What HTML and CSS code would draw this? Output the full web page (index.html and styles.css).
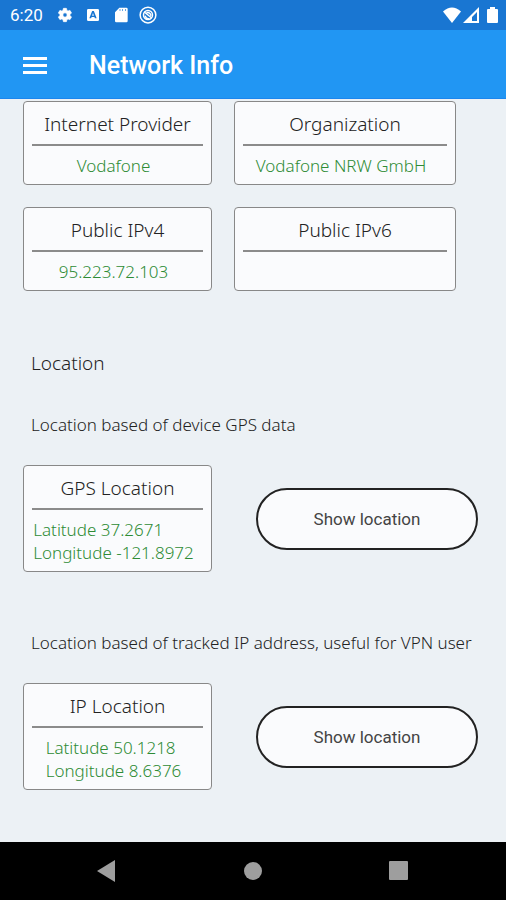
FILE: index.html
```html
<!DOCTYPE html>
<html lang="en">
<head>
<meta charset="utf-8">
<meta name="viewport" content="width=device-width, initial-scale=1">
<title>Network Info</title>
<link rel="stylesheet" href="styles.css">
</head>
<body>
<div class="status-bar">
  <span class="clock">6:20</span>
  <svg class="status-icon" viewBox="0 0 24 24" aria-hidden="true"><path stroke="currentColor" d="M19.4 13c0-.3.1-.6.1-1s0-.7-.1-1l2.100-1.600c.2-.1.3-.4.1-.6l-2-3.500c-.1-.2-.4-.3-.6-.2l-2.500 1c-.5-.4-1.100-.7-1.700-1l-.4-2.600c0-.3-.2-.5-.5-.5h-4c-.3 0-.5.2-.5.4L9 5.100c-.6.2-1.200.6-1.700 1l-2.500-1c-.2-.1-.5 0-.6.200l-2 3.500c-.1.2-.1.4.1.6L4.500 11c0 .3-.1.6-.1 1s0 .7.1 1l-2.200 1.600c-.2.200-.2.400-.1.600l2 3.500c.1.200.4.300.6.200l2.500-1c.5.400 1.100.7 1.700 1l.4 2.700c0 .2.200.4.500.4h4c.3 0 .5-.2.500-.4l.4-2.700c.6-.200 1.200-.6 1.700-1l2.500 1c.2.100.5 0 .6-.2l2-3.500c.1-.2.100-.4-.1-.6zM12 15.200a3.200 3.200 0 1 1 0-6.400 3.200 3.200 0 0 1 0 6.400z"/></svg>
  <svg class="status-icon" viewBox="0 0 24 24" aria-hidden="true"><path fill-rule="evenodd" d="M5 3h14q2 0 2 2v14q0 2-2 2H5q-2 0-2-2V5q0-2 2-2zm5.700 3L6.500 17h2.700l.7-2h4.200l.7 2h2.700L13.300 6zm1.300 3l1.300 4h-2.600z"/></svg>
  <svg class="status-icon" viewBox="0 0 24 24" aria-hidden="true"><path fill-rule="evenodd" d="M9.500 1H20q2 0 2 2v18q0 2-2 2H5q-2 0-2-2V8zM10 3v3h1V3zm4 0v3h1V3zm4 0v3h1V3z"/></svg>
  <svg class="status-icon target" viewBox="0 0 24 24" aria-hidden="true"><circle cx="12" cy="12" r="10.500"/><circle cx="12" cy="12" r="6"/><path d="M7 8l10 8M10 9q5-1 6 4M8 13q2 5 6 4"/></svg>
  <div class="signals">
    <svg class="wifi" viewBox="0 0 18 16" aria-hidden="true"><path d="M0 4.500Q9-3.500 18 4.500L9 16z"/></svg>
    <svg class="cell" viewBox="0 0 16 16" aria-hidden="true"><path fill-rule="evenodd" d="M16 0v16H0zM14 5l-5 5v4h5z"/></svg>
    <svg class="battery" viewBox="0 0 11 16" aria-hidden="true"><path d="M3 0h5v2h2q1 0 1 1v12q0 1-1 1H1q-1 0-1-1V3q0-1 1-1h2z"/></svg>
  </div>
</div>
<header class="app-bar">
  <button class="menu" type="button" aria-label="Menu"><svg viewBox="0 0 24 18" aria-hidden="true"><path d="M0 0h24v3H0zM0 7h24v3H0zM0 14h24v3H0z"/></svg></button>
  <h1>Network Info</h1>
</header>
<main>
  <div class="pair">
    <section class="card"><h2>Internet Provider</h2><p class="value">Vodafone</p></section>
    <section class="card"><h2>Organization</h2><p class="value">Vodafone NRW GmbH</p></section>
    <section class="card"><h2>Public IPv4</h2><p class="value">95.223.72.103</p></section>
    <section class="card"><h2>Public IPv6</h2><p class="value"></p></section>
  </div>
  <h2 class="heading">Location</h2>
  <p class="note">Location based of device GPS data</p>
  <div class="pair location">
    <section class="card"><h2>GPS Location</h2><p class="value">Latitude 37.2671<br>Longitude -121.8972</p></section>
    <button class="show" type="button">Show location</button>
  </div>
  <p class="note">Location based of tracked IP address, useful for VPN user</p>
  <div class="pair location">
    <section class="card"><h2>IP Location</h2><p class="value">Latitude 50.1218<br>Longitude 8.6376</p></section>
    <button class="show" type="button">Show location</button>
  </div>
</main>
<nav class="system-nav" aria-label="System">
  <button type="button" aria-label="Back"><svg viewBox="0 0 20 22" aria-hidden="true"><path d="M0 11L18 0v22z"/></svg></button>
  <button type="button" aria-label="Home"><svg viewBox="0 0 20 22" aria-hidden="true"><circle cx="10" cy="11" r="9"/></svg></button>
  <button type="button" aria-label="Recent apps"><svg viewBox="0 0 20 22" aria-hidden="true"><rect y="1" width="19" height="19" rx="1"/></svg></button>
</nav>
</body>
</html>
```
FILE: styles.css
```css
* {
  box-sizing: border-box;
}

body {
  display: flex;
  flex-direction: column;
  min-height: 100vh;
  margin: 0;
  background: #ecf1f5;
  color: #222;
  font-family: "Noto Sans", sans-serif;
  font-weight: 300;
}

h1, h2, p {
  margin: 0;
}

button {
  padding: 0;
  border: 0;
  background: none;
  color: inherit;
}

svg {
  display: block;
  fill: currentColor;
}

.status-bar {
  display: flex;
  align-items: center;
  gap: 12px;
  height: 30px;
  padding: 0 8px 0 10px;
  background: #1976d2;
  color: #fff;
}

.clock {
  margin-right: 2px;
  font: 400 17px/30px Roboto, sans-serif;
}

.status-icon {
  width: 16px;
  height: 16px;
}

.target {
  width: 18px;
  height: 18px;
  margin-left: -2px;
  fill: none;
  stroke: currentColor;
  stroke-width: 2;
}

.signals {
  display: flex;
  gap: 2px;
  margin-left: auto;
}

.wifi {
  width: 18px;
  height: 16px;
}

.cell {
  width: 16px;
  height: 16px;
}

.battery {
  width: 11px;
  height: 16px;
  margin-left: 6px;
}

.app-bar {
  display: flex;
  align-items: center;
  gap: 42px;
  height: 69px;
  padding: 3px 23px 0;
  border-bottom: 1px solid #1c86ee;
  background: #2196f3;
  color: #fff;
}

.menu svg {
  width: 24px;
  height: 18px;
}

.app-bar h1 {
  font: 500 25px/32px Roboto, sans-serif;
}

main {
  flex: 1;
  padding: 2px 28px 50px 23px;
}

.pair {
  display: grid;
  grid-template-columns: 189fr 222fr;
  gap: 22px;
  padding-right: 22px;
}

.location {
  align-items: center;
  column-gap: 44px;
  padding-right: 0;
}

.card {
  display: flex;
  flex-direction: column;
  align-items: center;
  padding: 0 8px;
  border: 1px solid #888;
  border-radius: 4px;
  background: #fafbfd;
}

.card h2 {
  width: 100%;
  height: 44px;
  border-bottom: 2px solid #8b8b8b;
  font-size: 19px;
  font-weight: 300;
  line-height: 44px;
  text-align: center;
}

.value {
  min-height: 38px;
  padding: 8px 8px 7px 0;
  color: #2e8b35;
  font-size: 17px;
  line-height: 23px;
}

.heading {
  margin: 60px 8px 38px;
  font-size: 19px;
  font-weight: 300;
  line-height: 24px;
}

.note {
  margin: 0 0 28px 8px;
  font-size: 17px;
  line-height: 24px;
}

.location + .note {
  margin-top: 59px;
}

.show {
  height: 62px;
  border: 2px solid #222;
  border-radius: 31px;
  background: #fafbfd;
  color: #444;
  font: 400 17px/24px Roboto, sans-serif;
}

.system-nav {
  display: flex;
  justify-content: space-between;
  align-items: center;
  height: 58px;
  padding: 0 97px;
  background: #000;
  color: #9e9e9e;
}

.system-nav svg {
  width: 20px;
  height: 22px;
}
```
